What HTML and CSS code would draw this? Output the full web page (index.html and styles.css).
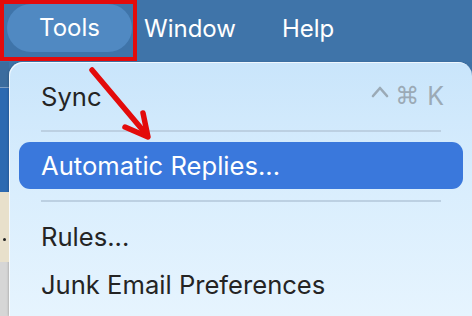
FILE: index.html
```html
<!DOCTYPE html>
<html>
<head>
<meta charset="utf-8">
<link rel="stylesheet" href="styles.css">
</head>
<body>
<div class="screen">
  <nav class="menubar">
    <span class="mb-item mb-active">Tools</span>
    <span class="mb-item">Window</span>
    <span class="mb-item mb-help">Help</span>
  </nav>
  <div class="desktop">
    <div class="strip">
      <div class="strip-a"></div>
      <div class="strip-line"></div>
      <div class="strip-b"></div>
      <div class="strip-c"><span class="dot"></span></div>
      <div class="strip-d"></div>
    </div>
    <div class="menu">
      <div class="item">
        <span class="label">Sync</span>
        <span class="shortcut"><svg class="k1" width="18" height="20" viewBox="0 0 18 20"><polyline points="2,12 9,4 16,12" fill="none" stroke="#9baab6" stroke-width="2.6" stroke-linecap="round" stroke-linejoin="round"/></svg><span class="k2">⌘</span><span class="k3">K</span></span>
      </div>
      <div class="sep"></div>
      <div class="item item-hl"><span class="label">Automatic Replies...</span></div>
      <div class="sep sep2"></div>
      <div class="item"><span class="label">Rules...</span></div>
      <div class="item"><span class="label">Junk Email Preferences</span></div>
    </div>
  </div>
  <div class="redbox"></div>
  <svg class="arrow" width="472" height="316" viewBox="0 0 472 316">
    <line x1="92" y1="70" x2="146" y2="134" stroke="#e30b0b" stroke-width="5.5" stroke-linecap="round"/>
    <polyline points="125,127 148,137 143,113" fill="none" stroke="#e30b0b" stroke-width="5.5" stroke-linecap="round" stroke-linejoin="round"/>
  </svg>
</div>
</body>
</html>
```
FILE: styles.css
```css
html, body {
  margin: 0;
  padding: 0;
}
body {
  width: 472px;
  height: 316px;
  overflow: hidden;
  font-family: "Inter", "Liberation Sans", sans-serif;
}
.screen {
  position: relative;
  width: 472px;
  height: 316px;
  background: #3e72a6;
}
.menubar {
  height: 62px;
  display: flex;
  align-items: center;
  padding-left: 7px;
  background: #3f74a9;
  color: #fff;
  font-size: 24px;
  box-sizing: border-box;
}
.mb-item {
  padding: 0 12px;
  line-height: 48px;
  margin-top: -4px;
}
.mb-active {
  width: 125px;
  box-sizing: border-box;
  text-align: center;
  background: #5089c2;
  border-radius: 24px;
  padding: 0;
  height: 48px;
  margin-top: -6px;
}
.mb-help {
  margin-left: 22px;
}
.desktop {
  display: flex;
  height: 254px;
}
.strip {
  width: 9px;
  display: flex;
  flex-direction: column;
}
.strip-a { height: 25px; background: #3b6c9e; }
.strip-line { height: 1px; background: #7f9fc4; }
.strip-b { height: 104px; background: #2d6ab1; }
.strip-c {
  height: 70px;
  background: #e8e0cb;
  position: relative;
}
.dot {
  position: absolute;
  left: 3px;
  top: 46px;
  width: 3px;
  height: 3px;
  border-radius: 50%;
  background: #222;
}
.strip-d { flex: 1; background: #d6d6d6; }
.menu {
  flex: 1;
  background: linear-gradient(180deg, #c9e5fb 0%, #d8edfd 45%, #e6f4fe 100%);
  border-radius: 14px 14px 0 0;
  box-shadow: inset 1px 1px 0 rgba(255,255,255,0.7), -1px 0 2px rgba(0,0,0,0.15);
  padding: 10px 9px 0 10px;
  box-sizing: border-box;
}
.item {
  height: 48px;
  display: flex;
  align-items: center;
  justify-content: space-between;
  padding: 0 19px 0 22px;
  font-size: 25.6px;
  color: #242424;
}
.item-hl {
  height: 47px;
  background: #3a78dc;
  color: #fff;
  border-radius: 11px;
}
.shortcut {
  color: #9baab6;
  display: flex;
  align-items: center;
  font-family: "DejaVu Sans", sans-serif;
  font-size: 24px;
}
.k1 { margin-right: 6px; margin-top: -4px; display: block; }
.k2 { margin-right: 8px; }
.k3 { font-family: "Inter", sans-serif; font-size: 25px; }
.sep {
  height: 2px;
  background: #bcd0e2;
  margin: 10px 22px 10px 22px;
}
.sep2 {
  margin-top: 11px;
}
.redbox {
  position: absolute;
  left: 0;
  top: 0;
  width: 137px;
  height: 61px;
  border: 4px solid #e30b0b;
  box-sizing: border-box;
}
.arrow {
  position: absolute;
  left: 0;
  top: 0;
}
```
